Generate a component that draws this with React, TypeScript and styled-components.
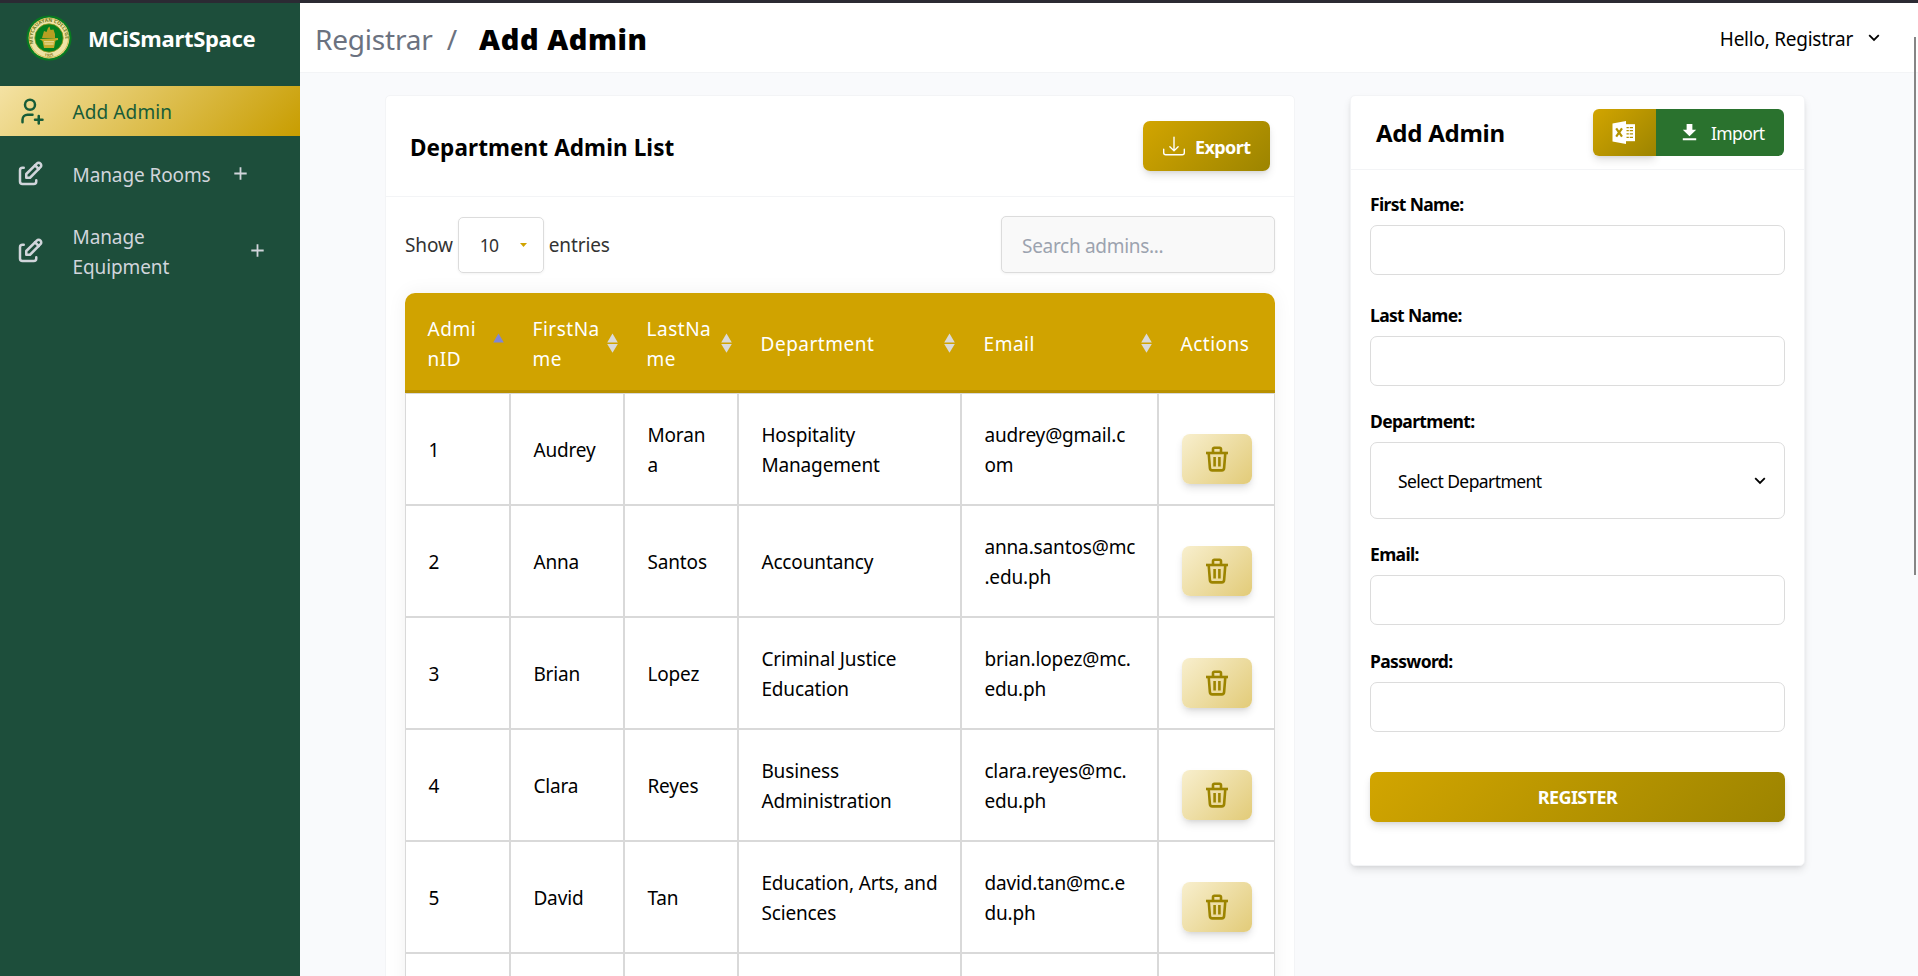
import React from 'react';
import styled, { createGlobalStyle } from 'styled-components';
import { TbUserPlus, TbEdit } from 'react-icons/tb';
import { BsDownload } from 'react-icons/bs';
import { MdDownload } from 'react-icons/md';

const gold = '#d0a300';
const goldGradient = 'linear-gradient(135deg, #d2a500 0%, #9c8400 100%)';
const line = '#f3f4f6';

const GlobalStyle = createGlobalStyle`
  *, *::before, *::after { box-sizing: border-box; }
  html, body { margin: 0; padding: 0; overflow: hidden; }
  body {
    font-family: "Noto Sans", "Open Sans", sans-serif;
    font-size: 19px;
    line-height: 30px;
    color: #000;
    background: #f9fafc;
  }
  button, input { font: inherit; margin: 0; }
  svg { display: block; flex: none; }
`;

const Page = styled.div`
  display: flex;
  width: 1918px;
  height: 976px;
  overflow: hidden;
  border-top: 3px solid #2b2a33;
  position: relative;
`;

const Sidebar = styled.aside`
  width: 300px;
  flex: none;
  background: #1d4e3b;
`;

const Brand = styled.div`
  display: flex;
  align-items: center;
  height: 83px;
  padding: 0 0 13px 26px;
  gap: 16px;
`;

const BrandName = styled.span`
  font-size: 22px;
  font-weight: 700;
  letter-spacing: -0.3px;
  color: #fff;
`;

const NavItem = styled.a<{ $active?: boolean; $height: number }>`
  display: flex;
  align-items: center;
  height: ${(p) => p.$height}px;
  padding-left: 15px;
  color: ${(p) => (p.$active ? '#175c38' : '#d1d5db')};
  background: ${(p) => (p.$active ? 'linear-gradient(135deg, #f4e2a3 0%, #c89d00 100%)' : 'none')};
`;

const NavIcon = styled.span`
  width: 30px;
  margin-right: 27.5px;
  font-size: 30px;
  display: flex;
`;

const NavLabel = styled.span<{ $width?: number; $spacing?: number }>`
  width: ${(p) => (p.$width ? `${p.$width}px` : 'auto')};
  padding-top: 2px;
  letter-spacing: ${(p) => p.$spacing ?? 0}px;
`;

const Main = styled.div`
  flex: 1;
  display: flex;
  flex-direction: column;
`;

const TopBar = styled.header`
  display: flex;
  align-items: center;
  justify-content: space-between;
  height: 70px;
  flex: none;
  padding: 0 38px 0 15px;
  background: #fff;
  border-bottom: 1px solid ${line};
`;

const Crumbs = styled.div`
  display: flex;
  align-items: center;
  font-size: 28px;
  line-height: 40px;
  padding-top: 3px;
`;

const CrumbParent = styled.span`
  color: #6b7280;
  letter-spacing: -0.2px;
`;

const CrumbSlash = styled.span`
  color: #6b7280;
  margin: 0 22px 0 14px;
`;

const CrumbCurrent = styled.span`
  font-size: 29px;
  font-weight: 900;
  letter-spacing: 0.55px;
`;

const UserMenu = styled.div`
  display: flex;
  align-items: center;
  gap: 15px;
`;

const UserName = styled.span`
  padding-top: 2px;
  letter-spacing: -0.25px;
`;

const Content = styled.main`
  display: flex;
  align-items: flex-start;
  gap: 55px;
  padding: 22px 0 0 85px;
`;

const Card = styled.section<{ $width: number; $height: number; $raised?: boolean }>`
  width: ${(p) => p.$width}px;
  height: ${(p) => p.$height}px;
  flex: none;
  background: #fff;
  border: 1px solid ${line};
  border-radius: 5px;
  box-shadow: ${(p) => (p.$raised ? '0 5px 8px -1px rgba(0,0,0,.1), 0 2px 5px -2px rgba(0,0,0,.1)' : 'none')};
`;

const CardHeader = styled.div<{ $height: number; $pad: string }>`
  display: flex;
  align-items: center;
  justify-content: space-between;
  height: ${(p) => p.$height}px;
  padding: ${(p) => p.$pad};
  border-bottom: 1px solid ${line};
`;

const CardTitle = styled.h2<{ $size: number; $spacing: number; $drop: number }>`
  margin: 0;
  padding-top: ${(p) => p.$drop}px;
  font-size: ${(p) => p.$size}px;
  font-weight: 700;
  letter-spacing: ${(p) => p.$spacing}px;
`;

const ExportButton = styled.button`
  display: flex;
  align-items: center;
  gap: 10px;
  width: 127px;
  height: 50px;
  padding: 0 0 0 20px;
  border: 0;
  border-radius: 7px;
  color: #fff;
  font-size: 18px;
  font-weight: 700;
  letter-spacing: -0.6px;
  background: ${goldGradient};
  box-shadow: 0 5px 8px -1px rgba(0, 0, 0, 0.12), 0 2px 5px -2px rgba(0, 0, 0, 0.1);
`;

const ExportLabel = styled.span`
  padding-top: 2px;
`;

const TableTools = styled.div`
  display: flex;
  align-items: center;
  justify-content: space-between;
  padding: 19px 19px 20px;
  color: #333;
`;

const Length = styled.label`
  display: flex;
  align-items: center;
  gap: 5px;
  letter-spacing: -0.12px;
`;

const LengthBox = styled.span`
  display: flex;
  align-items: center;
  justify-content: space-between;
  width: 86px;
  height: 56px;
  padding: 0 16px 0 21px;
  font-size: 17.5px;
  letter-spacing: -0.8px;
  border: 1px solid #dcdcdc;
  border-radius: 5px;
  box-shadow: 0 1px 3px rgba(0, 0, 0, 0.05);
`;

const SearchInput = styled.input`
  width: 274px;
  height: 57px;
  padding: 3px 20px 0;
  border: 1px solid #dcdcdc;
  border-radius: 5px;
  background: #f9f9f9;
  letter-spacing: -0.3px;
  box-shadow: 0 1px 3px rgba(0, 0, 0, 0.05);
  &::placeholder { color: #9ca3af; opacity: 1; }
`;

const TableFrame = styled.div`
  margin: 0 19px;
  height: 700px;
  border-radius: 10px 10px 0 0;
  box-shadow: 0 0 20px rgba(0, 0, 0, 0.06);
`;

const columns = '105px 114px 114px 223px 197px 117px';

const HeadRow = styled.div`
  display: grid;
  grid-template-columns: ${columns};
  height: 100px;
  background: ${gold};
  border-bottom: 3px solid #b99100;
  border-radius: 10px 10px 0 0;
  color: #fff;
`;

const HeadCell = styled.div`
  display: flex;
  align-items: center;
  justify-content: space-between;
  padding: 3px 6px 0 22.6px;
  letter-spacing: 0.5px;
`;

const HeadText = styled.span`
  padding-top: 1px;
  white-space: pre-line;
`;

const BodyRow = styled.div`
  display: grid;
  grid-template-columns: ${columns};
  height: 112px;
`;

const BodyCell = styled.div`
  display: flex;
  align-items: center;
  padding: 2px 6px 0 22.4px;
  border: 1px solid #d9d9d9;
  letter-spacing: -0.14px;
  white-space: pre-line;
`;

const ActionCell = styled(BodyCell)`
  padding-left: 23px;
`;

const DeleteButton = styled.button`
  display: flex;
  align-items: center;
  justify-content: center;
  width: 70px;
  height: 50px;
  padding: 0;
  margin-top: 17px;
  border: 0;
  border-radius: 8px;
  background: linear-gradient(135deg, #f8efce 0%, #e2cb78 100%);
  box-shadow: 0 5px 8px -1px rgba(0, 0, 0, 0.12), 0 2px 5px -2px rgba(0, 0, 0, 0.1);
`;

const ImportGroup = styled.div`
  display: flex;
  height: 47px;
`;

const TemplateButton = styled.button`
  display: flex;
  align-items: center;
  justify-content: center;
  width: 63px;
  padding: 0 1px 0 0;
  border: 0;
  border-radius: 6px 0 0 6px;
  background: ${goldGradient};
  box-shadow: 0 5px 8px -1px rgba(0, 0, 0, 0.12), 0 2px 5px -2px rgba(0, 0, 0, 0.1);
`;

const ImportButton = styled.button`
  display: flex;
  align-items: center;
  gap: 10px;
  width: 128px;
  padding: 0 0 0 22px;
  border: 0;
  border-radius: 0 6px 6px 0;
  background: #2a722e;
  color: #fff;
  font-size: 17.5px;
  letter-spacing: -0.6px;
  position: relative;
`;

const Form = styled.form`
  display: flex;
  flex-direction: column;
  padding: 19px 19px 0;
`;

const Field = styled.label<{ $after: number }>`
  display: flex;
  flex-direction: column;
  gap: 6px;
  margin-bottom: ${(p) => p.$after}px;
`;

const FieldName = styled.span`
  font-size: 17.5px;
  font-weight: 700;
  letter-spacing: -0.65px;
`;

const TextInput = styled.input`
  width: 415px;
  height: 50px;
  border: 1px solid #dcdcdc;
  border-radius: 7px;
  background: #fff;
`;

const SelectBox = styled.span`
  display: flex;
  align-items: center;
  justify-content: space-between;
  width: 415px;
  height: 77px;
  padding: 1px 18px 0 27px;
  border: 1px solid #dcdcdc;
  border-radius: 7px;
  font-size: 17.5px;
  letter-spacing: -0.57px;
`;

const RegisterButton = styled.button`
  width: 415px;
  height: 50px;
  padding: 0;
  border: 0;
  border-radius: 7px;
  color: #fff;
  font-size: 18px;
  font-weight: 700;
  letter-spacing: -0.6px;
  background: ${goldGradient};
  box-shadow: 0 5px 8px -1px rgba(0, 0, 0, 0.12), 0 2px 5px -2px rgba(0, 0, 0, 0.1);
`;

const ScrollThumb = styled.div`
  position: absolute;
  top: 34px;
  right: 2px;
  width: 2px;
  height: 538px;
  background: #858585;
`;

const Seal = () => (
  <svg width="46" height="46" viewBox="0 0 46 46">
    <defs>
      <path id="ringTop" d="M7.6 28.5 A16.3 16.3 0 1 1 38.4 28.5" />
      <path id="ringBottom" d="M15 39.8 A18.6 18.6 0 0 0 31 39.8" />
    </defs>
    <circle cx="23" cy="23" r="22.6" fill="#087a20" />
    <circle cx="23" cy="23" r="20.4" fill="#efe3a6" />
    <circle cx="23" cy="23" r="19.6" fill="none" stroke="#c9b23c" strokeWidth="0.8" />
    <circle cx="23" cy="23" r="14.2" fill="#05801f" />
    <circle cx="23" cy="23" r="14.2" fill="none" stroke="#9c9a1e" strokeWidth="0.8" />
    <text fontSize="4.9" fontWeight="700" fill="#6f7a1c" textLength="57">
      <textPath href="#ringTop" startOffset="0">MEYCAUAYAN COLLEGE</textPath>
    </text>
    <text fontSize="4" fontWeight="700" fill="#8a7c1c" textAnchor="middle">
      <textPath href="#ringBottom" startOffset="50%">1925</textPath>
    </text>
    <path d="M16 23 L18 16 L20.5 17 L22 13 L23.5 11.5 L24.5 15 L27.5 14.5 L29 19 L29 23 Z" fill="#b79f22" />
    <path d="M13.5 24 L32 23 L32 25 L29.5 25.5 L28 33 L18 33 L16.5 26 Z" fill="#c4ab2c" />
    <path d="M18 26.8h10M18.4 29h9.2" stroke="#f3e9b5" strokeWidth="1" />
  </svg>
);

const PlusMark = () => (
  <svg width="13" height="13" viewBox="0 0 13 13" fill="none" stroke="#d1d5db" strokeWidth="1.8">
    <path d="M6.5 0.3v12.4M0.3 6.5h12.4" />
  </svg>
);

const Chevron = () => (
  <svg width="12" height="8" viewBox="0 0 12 8" fill="none" stroke="#000" strokeWidth="1.8">
    <path d="M1.2 1.2L6 6l4.8-4.8" />
  </svg>
);

const Caret = () => (
  <svg width="7" height="4" viewBox="0 0 7 4">
    <path d="M0 0h7L3.5 4z" fill={gold} />
  </svg>
);

const SortMark = ({ ascending }: { ascending?: boolean }) => (
  <svg width="11" height="20" viewBox="0 0 11 20">
    <path d="M5.5 0.5L10.8 9.4H0.2z" fill={ascending ? '#7f86d8' : '#dadada'} />
    {!ascending && <path d="M5.5 19.8L10.8 11H0.2z" fill="#dadada" />}
  </svg>
);

const TrashIcon = () => (
  <svg width="22" height="26" viewBox="0 0 22 26" fill="none" stroke="#9c8400" strokeWidth="2.6" strokeLinejoin="round">
    <path d="M0 7h22" />
    <path d="M7 6.6V3.2Q7 1.8 8.4 1.8h5.2Q15 1.8 15 3.2v3.4" />
    <path d="M2.7 7.2L3.9 22.2Q4.1 24.4 6.2 24.4h9.6q2.1 0 2.3-2.2L19.3 7.2" />
    <path d="M8.6 11v9.4M13.4 11v9.4" />
  </svg>
);

const ExcelIcon = () => (
  <svg width="24" height="23" viewBox="0 0 24 23">
    <path d="M0.5 2.6L14 0v23L0.5 20.4z" fill="#fff" />
    <path d="M14 3.2h9v17h-9z" fill="#fff" />
    <path d="M14.5 6.6h6.5M14.5 9.7h6.5M14.5 12.9h6.5M14.5 16.3h6.5" stroke="#b39300" strokeWidth="1.2" />
    <path d="M17.3 5v13" stroke="#fff" strokeWidth="0.9" />
    <path d="M4.2 7.3l5.8 8.4M10 7.3l-5.8 8.4" stroke="#b39300" strokeWidth="2.2" />
  </svg>
);

const heads = [
  { text: 'Admi\nnID', sort: 'asc' },
  { text: 'FirstNa\nme', sort: 'both' },
  { text: 'LastNa\nme', sort: 'both' },
  { text: 'Department', sort: 'both' },
  { text: 'Email', sort: 'both' },
  { text: 'Actions', sort: 'none' },
];

const rows = [
  ['1', 'Audrey', 'Moran\na', 'Hospitality\nManagement', 'audrey@gmail.c\nom'],
  ['2', 'Anna', 'Santos', 'Accountancy', 'anna.santos@mc\n.edu.ph'],
  ['3', 'Brian', 'Lopez', 'Criminal Justice\nEducation', 'brian.lopez@mc.\nedu.ph'],
  ['4', 'Clara', 'Reyes', 'Business\nAdministration', 'clara.reyes@mc.\nedu.ph'],
  ['5', 'David', 'Tan', 'Education, Arts, and\nSciences', 'david.tan@mc.e\ndu.ph'],
  ['', '', '', '', ''],
];

export default function App() {
  return (
    <>
      <GlobalStyle />
      <Page>
        <Sidebar>
          <Brand>
            <Seal />
            <BrandName>MCiSmartSpace</BrandName>
          </Brand>
          <NavItem $active $height={50}>
            <NavIcon><TbUserPlus /></NavIcon>
            <NavLabel $spacing={0.1}>Add Admin</NavLabel>
          </NavItem>
          <NavItem $height={75}>
            <NavIcon><TbEdit /></NavIcon>
            <NavLabel $width={161} $spacing={-0.1}>Manage Rooms</NavLabel>
            <PlusMark />
          </NavItem>
          <NavItem $height={79}>
            <NavIcon><TbEdit /></NavIcon>
            <NavLabel $width={178} $spacing={-0.1}>Manage<br />Equipment</NavLabel>
            <PlusMark />
          </NavItem>
        </Sidebar>
        <Main>
          <TopBar>
            <Crumbs>
              <CrumbParent>Registrar</CrumbParent>
              <CrumbSlash>/</CrumbSlash>
              <CrumbCurrent>Add Admin</CrumbCurrent>
            </Crumbs>
            <UserMenu>
              <UserName>Hello, Registrar</UserName>
              <Chevron />
            </UserMenu>
          </TopBar>
          <Content>
            <Card $width={910} $height={900}>
              <CardHeader $height={101} $pad="0 24px">
                <CardTitle $size={22.5} $spacing={0.1} $drop={4}>Department Admin List</CardTitle>
                <ExportButton>
                  <BsDownload size={22} />
                  <ExportLabel>Export</ExportLabel>
                </ExportButton>
              </CardHeader>
              <TableTools>
                <Length>
                  <span>Show</span>
                  <LengthBox>10<Caret /></LengthBox>
                  <span>entries</span>
                </Length>
                <SearchInput placeholder="Search admins..." />
              </TableTools>
              <TableFrame>
                <HeadRow>
                  {heads.map((h) => (
                    <HeadCell key={h.text}>
                      <HeadText>{h.text}</HeadText>
                      {h.sort !== 'none' && <SortMark ascending={h.sort === 'asc'} />}
                    </HeadCell>
                  ))}
                </HeadRow>
                {rows.map((row, r) => (
                  <BodyRow key={r}>
                    {row.map((value, c) => (
                      <BodyCell key={c}>{value}</BodyCell>
                    ))}
                    <ActionCell>
                      <DeleteButton aria-label="Delete"><TrashIcon /></DeleteButton>
                    </ActionCell>
                  </BodyRow>
                ))}
              </TableFrame>
            </Card>
            <Card $width={455} $height={771} $raised>
              <CardHeader $height={74} $pad="0 20px 0 25px">
                <CardTitle $size={24} $spacing={-0.25} $drop={1}>Add Admin</CardTitle>
                <ImportGroup>
                  <TemplateButton aria-label="Template"><ExcelIcon /></TemplateButton>
                  <ImportButton>
                    <MdDownload size={23} />
                    <span>Import</span>
                  </ImportButton>
                </ImportGroup>
              </CardHeader>
              <Form>
                <Field $after={25}>
                  <FieldName>First Name:</FieldName>
                  <TextInput />
                </Field>
                <Field $after={20}>
                  <FieldName>Last Name:</FieldName>
                  <TextInput />
                </Field>
                <Field $after={20}>
                  <FieldName>Department:</FieldName>
                  <SelectBox>Select Department<Chevron /></SelectBox>
                </Field>
                <Field $after={21}>
                  <FieldName>Email:</FieldName>
                  <TextInput />
                </Field>
                <Field $after={40}>
                  <FieldName>Password:</FieldName>
                  <TextInput />
                </Field>
                <RegisterButton type="button">REGISTER</RegisterButton>
              </Form>
            </Card>
          </Content>
        </Main>
        <ScrollThumb />
      </Page>
    </>
  );
}
